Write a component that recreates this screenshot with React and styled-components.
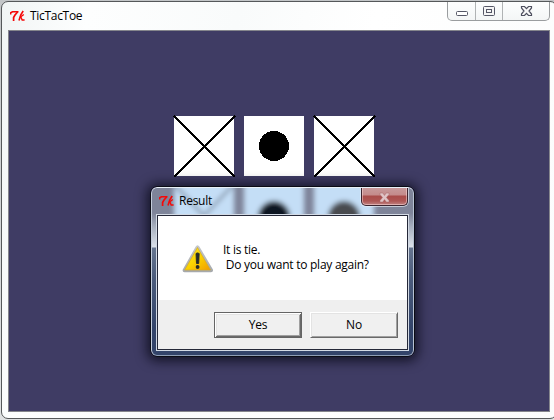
import React from "react";
import styled, { createGlobalStyle } from "styled-components";

const GlobalStyle = createGlobalStyle`
  * { box-sizing: border-box; }
  body { margin: 0; background: #d3d6d8; overflow: hidden; }
  body, button { font-family: "Open Sans", "Noto Sans", sans-serif; font-size: 12px; color: #000; }
`;

const Desktop = styled.div`
  position: relative;
  width: 554px;
  height: 420px;
  overflow: hidden;
  padding: 1px 0 0 1px;
  background: linear-gradient(#c3c6c8, #dfe1e2);
`;

const Window = styled.main`
  width: 556px;
  height: 418px;
  border: 1px solid #55585a;
  border-radius: 7px;
  background: linear-gradient(100deg, #f1f5f5 0, #fdfefe 14%, #f9fbfb 38%, #fff 60%, #fbfcfc);
  padding-left: 6px;
`;

const TitleBar = styled.header`
  display: flex;
  align-items: flex-start;
  height: 28px;
`;

const Title = styled.h1`
  margin: ${(p) => p.$top}px 0 0 4px;
  font-size: 12px;
  line-height: 16px;
  font-weight: 400;
  letter-spacing: ${(p) => p.$tracking}px;
`;

const TkSvg = styled.svg`
  display: block;
  flex: none;
  margin: ${(p) => p.$top}px 0 0 ${(p) => p.$left}px;
`;

const Controls = styled.div`
  display: flex;
  width: 103px;
  height: 19px;
  margin-left: auto;
  margin-right: 6px;
  border: 1px solid #9a9d9f;
  border-top: 0;
  border-radius: 0 0 5px 5px;
  background: linear-gradient(#fdfefe, #f4f6f6);
`;

const Control = styled.button`
  width: ${(p) => p.$width}px;
  height: 18px;
  padding: 0;
  border: 0;
  border-right: ${(p) => (p.$last ? "0" : "1px solid #b0b3b4")};
  background: none;
  svg { display: block; }
`;

const Board = styled.section`
  width: 542px;
  height: 382px;
  border: 1px solid #85868c;
  background: #3f3c64;
  padding: 85px 0 0 165px;
`;

const Cells = styled.div`
  display: grid;
  grid-template-columns: repeat(3, 60px);
  gap: 10px;
`;

const Cell = styled.div`
  height: 60px;
  background: #fff;
  svg { display: block; overflow: visible; }
`;

const Dialog = styled.section`
  position: absolute;
  left: 150px;
  top: 186px;
  width: 265px;
  height: 171px;
  border: 1px solid #0b0c16;
  border-radius: 7px;
  box-shadow: 0 1px 12px 3px rgba(5, 5, 18, 0.75);
  overflow: hidden;
`;

const Glass = styled.div`
  position: relative;
  height: 100%;
  border: 1px solid #d5deea;
  border-color: #e9f1f8 #b6c1d1 #8f9eb5 #c4cddb;
  border-radius: 6px;
  padding: 0 4px 4px;
  overflow: hidden;
  background: linear-gradient(#7e8499 0, #7e8499 25px, #a5adbc 38px, #dce2ea 59px, #66758f 60px, #4c5c7c 90px, #33446a 140px, #33446a);
`;

const Reflection = styled.svg`
  position: absolute;
  left: 0;
  top: 0;
`;

const DialogBar = styled.header`
  position: relative;
  display: flex;
  height: 26px;
`;

const CloseButton = styled.button`
  width: 47px;
  height: 19px;
  margin: -1px 1px 0 auto;
  padding: 0;
  border: 1px solid #3c2530;
  border-top: 0;
  border-radius: 0 0 5px 5px;
  background: linear-gradient(#c99c9e 0, #c48b8b 8px, #a94c4a 9px, #ae5654 14px, #bf8382);
  box-shadow: inset 0 0 0 1px rgba(255, 224, 224, 0.5), 0 0 0 1px rgba(232, 240, 248, 0.65);
  svg { display: block; margin: 2px auto 0; }
`;

const Client = styled.div`
  position: relative;
  height: 137px;
  border: 1px solid #d4dbe5;
  background: #efefef;
`;

const ClientInner = styled.div`
  height: 135px;
  border: 1px solid #252838;
`;

const Message = styled.div`
  display: flex;
  height: 84px;
  background: #fff;
  padding: 29px 0 0 24px;
`;

const MessageText = styled.p`
  margin: -3px 0 0 9px;
  font-size: 12px;
  line-height: 15px;
  letter-spacing: -0.26px;
  white-space: pre;
`;

const Actions = styled.footer`
  display: flex;
  justify-content: flex-end;
  gap: 8px;
  padding: 12px 9px 0 0;
`;

const ActionButton = styled.button`
  width: 88px;
  height: 26px;
  padding: 0 0 1px;
  font-size: 12px;
  letter-spacing: -0.2px;
  background: #f0f0f0;
  border: 1px solid;
  border-color: ${(p) => (p.$default ? "#646464" : "#fff #696969 #696969 #fff")};
  box-shadow: ${(p) =>
    p.$default
      ? "inset 1px 1px #fff, inset -1px -1px #696969, inset 2px 2px #e3e3e3, inset -2px -2px #a0a0a0"
      : "inset 1px 1px #e3e3e3, inset -1px -1px #a0a0a0"};
`;

function TkIcon({ top, left }) {
  return (
    <TkSvg $top={top} $left={left} width="16" height="12" viewBox="0 0 16 12" fill="none" stroke="#f50808">
      <path d="M.7 4.5V2.8L2.5 1.8H8.5" strokeWidth="1.5" />
      <path d="M7.6 2L5 5L3.6 7.5V11" strokeWidth="1.7" />
      <path d="M13.2 1L10.8 4.8L9 10.5" strokeWidth="1.6" />
      <path d="M9.8 7.6L13.8 4.6" strokeWidth="1.3" />
      <path d="M10.8 7L12.2 10H14.6" strokeWidth="1.4" />
    </TkSvg>
  );
}

function Mark({ kind }) {
  return (
    <svg width="60" height="60" shapeRendering="crispEdges">
      {kind === "X" ? (
        <path d="M0 0L61 61M61 0L0 61" stroke="#000" strokeWidth="2.2" />
      ) : (
        <circle cx="30" cy="30" r="15" />
      )}
    </svg>
  );
}

function WarningIcon() {
  return (
    <svg width="32" height="30" viewBox="0 0 32 30">
      <defs>
        <linearGradient id="amber" x1="0" y1="0" x2="1" y2="1">
          <stop offset="0" stopColor="#ffe92e" />
          <stop offset=".5" stopColor="#fbd400" />
          <stop offset="1" stopColor="#f19b00" />
        </linearGradient>
        <linearGradient id="rim" x1="0" y1="0" x2="0" y2="1">
          <stop offset="0" stopColor="#c5c8cb" />
          <stop offset="1" stopColor="#a5a8ab" />
        </linearGradient>
      </defs>
      <path d="M15.5 .2Q16.7 .2 17.5 1.7L30.9 24.5Q31.5 27 29 27.2H2.5Q0 27 .8 24.5L13.6 1.7Q14.4 .2 15.5 .2Z" fill="url(#rim)" />
      <path d="M15.5 2.5L28.5 25H2.7Z" fill="url(#amber)" stroke="#d9aa22" strokeWidth=".7" />
      <path d="M14 8.5Q15.5 7.3 17.2 8.5L16.7 18.5H14.5Z" fill="#252a2a" stroke="#252a2a" strokeWidth=".9" />
      <circle cx="15.6" cy="22" r="1.9" fill="#252a2a" />
    </svg>
  );
}

export default function App() {
  return (
    <>
      <GlobalStyle />
      <Desktop>
        <Window>
          <TitleBar>
            <TkIcon top={8} left={2} />
            <Title $top={6} $tracking={-0.3}>TicTacToe</Title>
            <Controls>
              <Control $width={28} aria-label="Minimize">
                <svg width="27" height="18"><rect x="8.5" y="9.5" width="11" height="4" rx="1" fill="#fff" stroke="#555766" /></svg>
              </Control>
              <Control $width={27} aria-label="Maximize">
                <svg width="26" height="18" fill="#f5f5f5" stroke="#555766"><rect x="7.5" y="4.5" width="11" height="9" rx="1" /><rect x="10.5" y="7.5" width="5" height="3" /></svg>
              </Control>
              <Control $width={46} $last aria-label="Close">
                <svg width="46" height="18"><path d="M18.5 4.5H21.5L23.5 6.7L25.5 4.5H28.5V6L26 9L28.5 12V13.5H25.5L23.5 11.3L21.5 13.5H18.5V12L21 9L18.5 6Z" fill="#f7f7f7" stroke="#4d4f5e" strokeWidth="1.2" /></svg>
              </Control>
            </Controls>
          </TitleBar>
          <Board>
            <Cells>
              {["X", "O", "X"].map((kind, i) => (
                <Cell key={i}><Mark kind={kind} /></Cell>
              ))}
            </Cells>
          </Board>
        </Window>
        <Dialog role="dialog" aria-label="Result">
          <Glass>
            <Reflection width="261" height="28">
              <defs>
                <filter id="soft" x="-20%" y="-50%" width="140%" height="200%"><feGaussianBlur stdDeviation="2.7" /></filter>
              </defs>
              <g filter="url(#soft)">
                <path d="M22-10H82V50H22ZM92-10H152V50H92ZM162-10H222V50H162Z" fill="#c4def6" />
                <path d="M22-4L52 28L82-4" fill="none" stroke="#8697ac" strokeWidth="3" />
                <circle cx="122" cy="29" r="16" fill="#111820" />
                <circle cx="192" cy="29" r="16" fill="#484c50" />
              </g>
            </Reflection>
            <DialogBar>
              <TkIcon top={7} left={3} />
              <Title $top={5} $tracking={-0.25}>Result</Title>
              <CloseButton aria-label="Close">
                <svg width="11" height="11"><path d="M1 1H3.8L5.5 3.4L7.2 1H10V2.5L7.5 5.5L10 8.5V10H7.2L5.5 7.6L3.8 10H1V8.5L3.5 5.5L1 2.5Z" fill="#e0c4c6" stroke="#a6686b" strokeWidth=".5" /></svg>
              </CloseButton>
            </DialogBar>
            <Client>
              <ClientInner>
                <Message>
                  <WarningIcon />
                  <MessageText>{"It is tie.\n Do you want to play again?"}</MessageText>
                </Message>
                <Actions>
                  <ActionButton $default>Yes</ActionButton>
                  <ActionButton>No</ActionButton>
                </Actions>
              </ClientInner>
            </Client>
          </Glass>
        </Dialog>
      </Desktop>
    </>
  );
}
